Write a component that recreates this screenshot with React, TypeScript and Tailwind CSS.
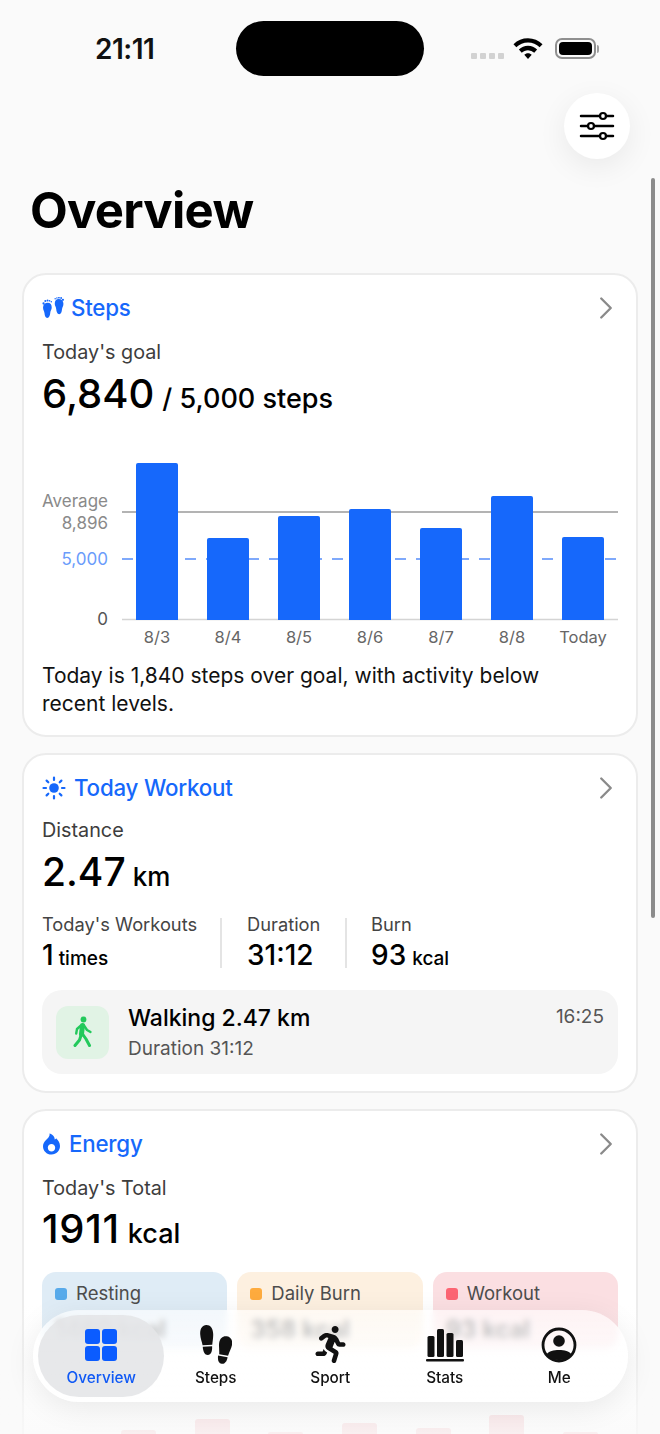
import { ChevronRight } from "lucide-react";
import { FaRunning } from "react-icons/fa";

const FONT = "font-['Inter','Liberation_Sans',sans-serif]";

function Wifi() {
  return (
    <svg width="36" height="29" viewBox="0 0 30 24" className="text-black">
      <path d="M15 3.5c4.6 0 8.900 1.800 12.100 4.900l-2.400 2.600A14 14 0 0 0 15 7a14 14 0 0 0-9.700 4L2.900 8.400A17.400 17.400 0 0 1 15 3.500z" fill="currentColor" />
      <path d="M15 9.800c2.900 0 5.600 1.100 7.600 3.100l-2.400 2.600A7.500 7.500 0 0 0 15 13.400c-2 0-3.800.8-5.200 2.100l-2.400-2.600c2-2 4.700-3.100 7.600-3.100z" fill="currentColor" />
      <path d="M15 16c1.200 0 2.300.5 3.100 1.300L15 20.800l-3.100-3.500c.8-.8 1.900-1.300 3.100-1.300z" fill="currentColor" />
    </svg>
  );
}

function Sliders() {
  return (
    <svg width="36" height="32" viewBox="0 0 36 32" fill="none" stroke="black" strokeWidth="2.500" strokeLinecap="round">
      <path d="M2 6h19M27 6h7M2 16h7M15 16h19M2 26h19M27 26h7" />
      <circle cx="24" cy="6" r="3" strokeWidth="2.200" />
      <circle cx="12" cy="16" r="3" strokeWidth="2.200" />
      <circle cx="24" cy="26" r="3" strokeWidth="2.200" />
    </svg>
  );
}

function BabyFeet() {
  const foot = "M1 10c0-3 2-4.500 4.500-4.500s3.800 1.500 3.800 4.500c0 2-1.200 3-1.400 5-.2 2.500-1 5-2.900 5-1.700 0-2.400-2-2.600-4.500C2.200 13.500 1 12.500 1 10z";
  return (
    <svg width="23" height="23" viewBox="0 0 22 22" fill="#1668fb">
      <path d={foot} />
      <g transform="translate(21.500 -3.500) scale(-1 1)">
        <path d={foot} />
      </g>
      <circle cx="1.500" cy="6.200" r="1.100" />
      <circle cx="3.200" cy="3.900" r="1" />
      <circle cx="5.300" cy="3.300" r=".9" />
      <circle cx="7.200" cy="3.600" r=".8" />
      <circle cx="8.900" cy="4.500" r=".7" />
      <circle cx="20" cy="2.700" r="1.100" />
      <circle cx="18.300" cy=".9" r=".9" />
      <circle cx="16.200" cy=".6" r=".8" />
      <circle cx="14.300" cy=".9" r=".7" />
      <circle cx="12.600" cy="1.600" r=".7" />
    </svg>
  );
}

function SunIcon() {
  return (
    <svg width="24" height="24" viewBox="0 0 24 24" fill="#1668fb" stroke="#1668fb" strokeWidth="2.200" strokeLinecap="round" className="mr-[2px]">
      <circle cx="12" cy="12" r="4.800" stroke="none" />
      <path d="M12 1.500v2.500M12 20v2.500M1.500 12H4M20 12h2.500M4.600 4.600l1.700 1.700M17.700 17.700l1.700 1.700M4.600 19.400l1.700-1.700M17.700 6.300l1.700-1.700" />
    </svg>
  );
}

function Flame() {
  return (
    <svg width="19" height="22" viewBox="0 0 18 22" fill="#1668fb" className="mr-[2px]">
      <path fillRule="evenodd" d="M7 .5c1 .2 2.800 1 4 2.600 1 1.300 1.200 2.500 1.200 3.500.8-.2 1.200-.8 1.400-1.300 2.300 2 3.900 4.800 3.900 7.800 0 4.700-3.600 8.400-8.500 8.400S.5 17.800.5 13.200c0-2.500 1.200-4.300 2.800-6C5.300 5.200 7.600 3.400 7 .5zM9 11c-2 0-3.700 1.600-3.700 3.700S7 18.400 9 18.400s3.700-1.600 3.700-3.700S11 11 9 11z" />
    </svg>
  );
}

function Walker() {
  return (
    <svg width="20" height="32" viewBox="0 0 20 32" fill="none" stroke="#22c95b" strokeLinecap="round" strokeLinejoin="round">
      <circle cx="10.500" cy="3.500" r="2.900" fill="#22c95b" stroke="none" />
      <path d="M9.500 9.500 8.500 18" strokeWidth="5" />
      <path d="M8 9.500 4 13l-.8 4.500M11 9.500l3 4.500 3.500 2" strokeWidth="2.400" />
      <path d="M8.500 18 6.500 24 2 29.500M9.500 18l3.500 5 3.500 6.500" strokeWidth="3" />
    </svg>
  );
}

function Soles() {
  return (
    <svg width="32" height="39" viewBox="0 0 32 39" fill="#111">
      <g transform="rotate(-3 7 15)">
        <path d="M7 0c4 0 6.500 3.500 6.500 9 0 4-1 7.500-1.500 11H2.300C1.800 16.500.5 13 .5 9 .5 3.500 3 0 7 0z" />
        <path d="M2.400 21.500h9.400c0 5-1.700 8.500-4.700 8.500s-4.700-3.500-4.700-8.500z" />
      </g>
      <g transform="rotate(10 24 25)">
        <path d="M24.500 11c4 0 6.500 3 6.500 7.500 0 3.500-1.400 7-2 11.500h-9c-.5-4.500-2-8-2-11.500 0-4.500 2.500-7.500 6.500-7.500z" />
        <path d="M19.200 31.500h9.600c0 4.500-1.800 7.500-4.800 7.500s-4.800-3-4.800-7.500z" />
      </g>
    </svg>
  );
}

function BarsIcon() {
  return (
    <svg width="38" height="34" viewBox="0 0 38 34" fill="#111">
      <rect x="1.500" y="8" width="7" height="21" rx="1.500" />
      <rect x="11" y="1" width="7" height="28" rx="1.500" />
      <rect x="20.500" y="5" width="7" height="24" rx="1.500" />
      <rect x="30" y="12" width="7" height="17" rx="1.500" />
      <rect x="0" y="31" width="38" height="2.600" rx="1" />
    </svg>
  );
}

function MeIcon() {
  return (
    <svg width="36" height="36" viewBox="0 0 36 36">
      <circle cx="18" cy="18" r="16" fill="none" stroke="#111" strokeWidth="2.800" />
      <circle cx="18" cy="14" r="5.800" fill="#111" />
      <path d="M5.500 27.500C8 24 12.500 23 18 23s10 1 12.500 4.500A16 16 0 0 1 18 33 16 16 0 0 1 5.500 27.500z" fill="#111" />
    </svg>
  );
}

function CardHeader({ icon, title }: { icon: React.ReactNode; title: string }) {
  return (
    <div className="flex h-[30px] items-center justify-between">
      <div className="flex items-center gap-[6px]">
        {icon}
        <span className="text-[22.300px] font-medium tracking-[-0.2px] text-[#1668fb]">{title}</span>
      </div>
      <ChevronRight size={38} strokeWidth={1.5} className="mr-[-7px] text-[#8a8a8a]" />
    </div>
  );
}

const bars = [
  { x: 94, top: 463, label: "8/3" },
  { x: 165, top: 538, label: "8/4" },
  { x: 236, top: 516, label: "8/5" },
  { x: 307, top: 509, label: "8/6" },
  { x: 378, top: 528, label: "8/7" },
  { x: 449, top: 496, label: "8/8" },
  { x: 520, top: 537, label: "Today" },
];

// chart top sits at y=455 on the page
function StepsChart() {
  const y = (v: number) => v - 455;
  return (
    <svg width="576" height="195" viewBox="0 0 576 195" className="block">
      <line x1="80" x2="576" y1={y(512)} y2={y(512)} stroke="#9a9a9a" strokeWidth="1.300" />
      <line x1="80" x2="576" y1={y(559)} y2={y(559)} stroke="#7fa9fb" strokeWidth="2" strokeDasharray="11 10" />
      <line x1="80" x2="576" y1={y(619.500)} y2={y(619.500)} stroke="#d4d4d4" strokeWidth="1.300" />
      {bars.map((b) => (
        <g key={b.label}>
          <path
            d={`M${b.x} ${y(620)}V${y(b.top) + 2}q0-2 2-2h38q2 0 2 2V${y(620)}z`}
            fill="#1668fb"
          />
          <text x={b.x + 21} y={y(643)} textAnchor="middle" fontSize="16.500" fill="#666">
            {b.label}
          </text>
        </g>
      ))}
      <text x="66" y={y(507)} textAnchor="end" fontSize="17" fill="#8a8a8a">Average</text>
      <text x="66" y={y(529)} textAnchor="end" fontSize="17" fill="#8a8a8a">8,896</text>
      <text x="66" y={y(565)} textAnchor="end" fontSize="17" fill="#6a9cfb">5,000</text>
      <text x="66" y={y(625)} textAnchor="end" fontSize="17" fill="#555">0</text>
    </svg>
  );
}

const energyBars = [
  { left: "ml-[79px]", h: "h-[4px]" },
  { left: "ml-[39px]", h: "h-[15px]" },
  { left: "ml-[38px]", h: "h-[2px]" },
  { left: "ml-[39px]", h: "h-[11px]" },
  { left: "ml-[39px]", h: "h-[6px]" },
  { left: "ml-[38px]", h: "h-[19px]" },
  { left: "ml-[39px]", h: "h-[2px]" },
];

function StatBox({ tint, dot, label, value }: { tint: string; dot: string; label: string; value: string }) {
  return (
    <div className={`h-[77px] flex-1 rounded-[14px] px-[13px] pt-[8px] ${tint}`}>
      <div className="flex items-center gap-[9px] text-[18.500px] text-[#4d4d4d]">
        <span className={`size-[12px] rounded-[3px] ${dot}`} />
        {label}
      </div>
      <div className="mt-[6px] text-[24px] leading-[32px] font-semibold text-[#222]">{value}</div>
    </div>
  );
}

function NavItem({ icon, label, active }: { icon: React.ReactNode; label: string; active?: boolean }) {
  return (
    <div className="flex w-[114.500px] flex-col items-center">
      <div className="flex h-[40px] items-center justify-center">{icon}</div>
      <span className={`mt-[3px] text-[15.300px] leading-[20px] font-medium ${active ? "text-[#1059f5]" : "text-[#111]"}`}>
        {label}
      </span>
    </div>
  );
}

export default function App() {
  return (
    <div className={`relative h-[1434px] w-[660px] overflow-hidden bg-[#fafafa] ${FONT}`}>
      {/* status bar */}
      <div className="relative flex h-[93px] items-start justify-between pt-[21px] pl-[95px] pr-[61px]">
        <span className="mt-[12px] text-[28px] leading-[32px] font-semibold tracking-[-0.5px] text-[#111]">21:11</span>
        <div className="absolute top-[21px] left-[236px] h-[55px] w-[188px] rounded-full bg-black" />
        <div className="flex items-start">
          <div className="mt-[32px] flex gap-[3px]">
            <span className="h-[6px] w-[6px] rounded-[1px] bg-[#d2d2d2]" />
            <span className="h-[6px] w-[6px] rounded-[1px] bg-[#d2d2d2]" />
            <span className="h-[6px] w-[6px] rounded-[1px] bg-[#d2d2d2]" />
            <span className="h-[6px] w-[6px] rounded-[1px] bg-[#d2d2d2]" />
          </div>
          <div className="mt-[13px] ml-[6px]">
            <Wifi />
          </div>
          <div className="mt-[17px] ml-[9px] flex items-center">
            <div className="h-[21px] w-[41px] rounded-[7px] border-2 border-[#8f8f8f] p-[2px]">
              <div className="h-full w-full rounded-[4px] bg-black" />
            </div>
            <div className="ml-[1px] h-[8px] w-[2px] rounded-r bg-[#a0a0a0]" />
          </div>
        </div>
      </div>

      {/* settings button */}
      <div className="flex justify-end pr-[30px]">
        <div className="flex h-[66px] w-[66px] items-center justify-center rounded-full bg-white shadow-[0_8px_30px_rgba(0,0,0,0.07)]">
          <Sliders />
        </div>
      </div>

      <h1 className="mt-[18px] pl-[30px] text-[49px] leading-[68px] font-bold tracking-[-0.7px] text-black">Overview</h1>

      <div className="mt-[28px] flex flex-col gap-[16px] px-[22px]">
        {/* steps card */}
        <section className="h-[464px] rounded-[24px] border-2 border-[#ececec] bg-white px-[18px] pt-[18px]">
          <CardHeader icon={<BabyFeet />} title="Steps" />
          <div className="mt-[17px] text-[19.800px] leading-[24px] text-[#3d3d3d]">Today's goal</div>
          <div className="mt-[5px] flex items-baseline gap-[8px] leading-[50px] text-black">
            <span className="text-[40px] font-medium">6,840</span>
            <span className="text-[27px] font-medium">/ 5,000 steps</span>
          </div>
          <div className="mt-[31px]">
            <StepsChart />
          </div>
          <p className="mt-[12px] max-w-[520px] text-[21px] leading-[28px] text-[#111]">
            Today is 1,840 steps over goal, with activity below recent levels.
          </p>
        </section>

        {/* workout card */}
        <section className="h-[340px] rounded-[24px] border-2 border-[#ececec] bg-white px-[18px] pt-[18px]">
          <CardHeader icon={<SunIcon />} title="Today Workout" />
          <div className="mt-[15px] text-[19.800px] leading-[24px] text-[#3d3d3d]">Distance</div>
          <div className="mt-[5px] flex items-baseline gap-[7px] leading-[50px] text-black">
            <span className="text-[39px] font-medium">2.47</span>
            <span className="text-[26px] font-medium">km</span>
          </div>
          <div className="mt-[11px] flex">
            <div className="flex w-[178px] flex-col">
              <div className="text-[18.300px] leading-[22px] text-[#444]">Today's Workouts</div>
              <div className="mt-[3px] flex items-baseline gap-[5px] leading-[34px] text-black">
                <span className="text-[28px] font-medium">1</span>
                <span className="text-[19px] font-medium">times</span>
              </div>
            </div>
            <div className="mt-[5px] mb-[8px] w-[2px] bg-[#e4e4e4]" />
            <div className="w-[123px] pl-[25px]">
              <div className="text-[18.300px] leading-[22px] text-[#444]">Duration</div>
              <div className="mt-[3px] text-[28px] leading-[34px] font-medium text-black">31:12</div>
            </div>
            <div className="mt-[5px] mb-[8px] w-[2px] bg-[#e4e4e4]" />
            <div className="pl-[24px]">
              <div className="text-[18.300px] leading-[22px] text-[#444]">Burn</div>
              <div className="mt-[3px] flex items-baseline gap-[6px] leading-[34px] text-black">
                <span className="text-[28px] font-medium">93</span>
                <span className="text-[19px] font-medium">kcal</span>
              </div>
            </div>
          </div>
          <div className="mt-[14px] flex h-[84px] items-center rounded-[20px] bg-[#f5f5f5] px-[14px]">
            <div className="flex size-[53px] items-center justify-center rounded-[12px] bg-[#e1f3e5]">
              <Walker />
            </div>
            <div className="ml-[19px] flex-1">
              <div className="text-[23px] leading-[28px] font-medium text-black">Walking 2.47 km</div>
              <div className="mt-[5px] text-[19px] leading-[24px] text-[#555]">Duration 31:12</div>
            </div>
            <div className="mb-[30px] text-[19px] text-[#555]">16:25</div>
          </div>
        </section>

        {/* energy card */}
        <section className="rounded-[24px] border-2 border-[#ececec] bg-white px-[18px] pt-[18px] pb-[20px]">
          <CardHeader icon={<Flame />} title="Energy" />
          <div className="mt-[17px] text-[19.800px] leading-[24px] text-[#3d3d3d]">Today's Total</div>
          <div className="mt-[4px] flex items-baseline gap-[8px] leading-[50px] text-black">
            <span className="text-[40px] font-medium tracking-[0.7px]">1911</span>
            <span className="text-[27px] font-medium">kcal</span>
          </div>
          <div className="mt-[13px] flex gap-[10px]">
            <StatBox tint="bg-[#dfecf6]" dot="bg-[#58aaea]" label="Resting" value="1460 kcal" />
            <StatBox tint="bg-[#fdf0e0]" dot="bg-[#feab3e]" label="Daily Burn" value="358 kcal" />
            <StatBox tint="bg-[#fbdfe2]" dot="bg-[#fc6573]" label="Workout" value="93 kcal" />
          </div>
          <div className="mt-[65px] flex h-[20px] items-end">
            {energyBars.map((b, i) => (
              <div key={i} className={`w-[35px] ${b.left} ${b.h} rounded-t-[3px] bg-[#f6c5ca]`} />
            ))}
          </div>
        </section>
      </div>

      {/* fade under the tab bar */}
      <div className="pointer-events-none absolute inset-x-0 bottom-0 h-[130px] bg-gradient-to-b from-transparent to-[#fafafa]/80" />

      {/* scroll indicator */}
      <div className="absolute top-[178px] right-[5px] h-[740px] w-[4px] rounded-full bg-[#8c8c8c]" />

      {/* tab bar */}
      <nav className="absolute top-[1310px] left-[33px] flex h-[92px] w-[595px] items-center rounded-[46px] bg-gradient-to-b from-white/60 to-white/90 pl-[11px] shadow-[0_6px_30px_rgba(0,0,0,0.08)] backdrop-blur-[3px]">
        <div className="absolute top-[5px] left-[5px] h-[82px] w-[126px] rounded-[41px] bg-[#e4e6e8]/90" />
        <div className="relative flex w-full items-center">
          <NavItem
            active
            label="Overview"
            icon={
              <div className="grid grid-cols-2 gap-[2px]">
                <span className="size-[15px] rounded-[3px] bg-[#0b5cff]" />
                <span className="size-[15px] rounded-[3px] bg-[#0b5cff]" />
                <span className="size-[15px] rounded-[3px] bg-[#0b5cff]" />
                <span className="size-[15px] rounded-[3px] bg-[#0b5cff]" />
              </div>
            }
          />
          <NavItem label="Steps" icon={<Soles />} />
          <NavItem label="Sport" icon={<FaRunning size={37} color="#111" />} />
          <NavItem label="Stats" icon={<BarsIcon />} />
          <NavItem label="Me" icon={<MeIcon />} />
        </div>
      </nav>
    </div>
  );
}
